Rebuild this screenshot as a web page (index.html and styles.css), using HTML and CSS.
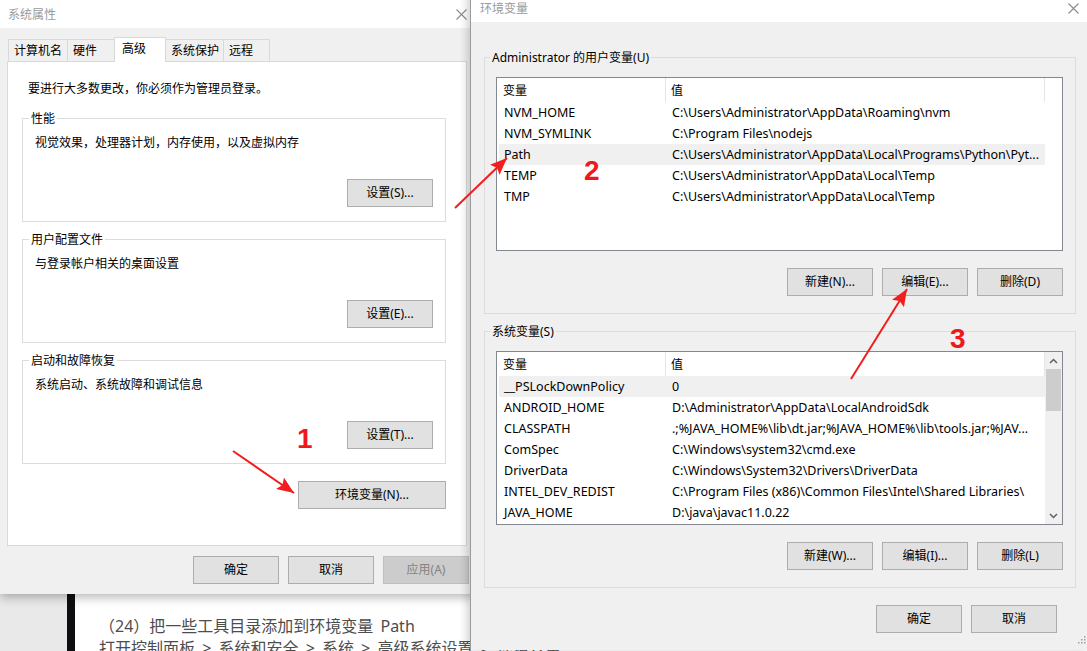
FILE: index.html
```html
<!DOCTYPE html>
<html lang="zh-CN">
<head>
<meta charset="utf-8">
<title>环境变量</title>
<link rel="stylesheet" href="styles.css">
</head>
<body>
<div class="desktop">
  <div class="doc">
    <div class="doc-side"></div>
    <div class="doc-strip"></div>
    <div class="doc-page">
      <p class="doc-line">（24）把一些工具目录添加到环境变量 Path</p>
      <p class="doc-line">打开控制面板 &gt; 系统和安全 &gt; 系统 &gt; 高级系统设置 &gt; 环境变量</p>
    </div>
  </div>

  <div class="win win-sys">
    <div class="titlebar">
      <span class="title">系统属性</span>
      <span class="close"><svg width="11" height="11" viewBox="0 0 11 11"><path d="M0.5 0.5L10.5 10.5M10.5 0.5L0.5 10.5" stroke="#8c8c8c" stroke-width="1.1" fill="none"/></svg></span>
    </div>
    <div class="sys-body">
      <div class="tabs">
        <div class="tab t1">计算机名</div>
        <div class="tab t2">硬件</div>
        <div class="tab t3 active">高级</div>
        <div class="tab t4">系统保护</div>
        <div class="tab t5">远程</div>
      </div>
      <div class="tabpanel">
        <p class="notice">要进行大多数更改，你必须作为管理员登录。</p>
        <div class="group">
          <div class="group-label">性能</div>
          <p class="group-desc">视觉效果，处理器计划，内存使用，以及虚拟内存</p>
          <div class="btnrow"><button class="btn">设置(S)...</button></div>
        </div>
        <div class="group">
          <div class="group-label">用户配置文件</div>
          <p class="group-desc">与登录帐户相关的桌面设置</p>
          <div class="btnrow"><button class="btn">设置(E)...</button></div>
        </div>
        <div class="group">
          <div class="group-label">启动和故障恢复</div>
          <p class="group-desc">系统启动、系统故障和调试信息</p>
          <div class="btnrow"><button class="btn">设置(T)...</button></div>
        </div>
        <div class="btnrow env-row"><button class="btn btn-wide">环境变量(N)...</button></div>
      </div>
      <div class="dlg-buttons sys-buttons">
        <button class="btn">确定</button>
        <button class="btn">取消</button>
        <button class="btn btn-disabled">应用(A)</button>
      </div>
    </div>
  </div>

  <div class="win win-env">
    <div class="titlebar">
      <span class="title">环境变量</span>
      <span class="close close-env"><svg width="11" height="11" viewBox="0 0 11 11"><path d="M0.5 0.5L10.5 10.5M10.5 0.5L0.5 10.5" stroke="#8c8c8c" stroke-width="1.1" fill="none"/></svg></span>
    </div>
    <div class="env-body">
      <div class="group egroup">
        <div class="group-label">Administrator 的用户变量(U)</div>
        <div class="list">
          <div class="list-main">
            <div class="list-head"><div class="hcell h1">变量</div><div class="hcell h2">值</div></div>
            <div class="rows">
              <div class="row"><span class="c1">NVM_HOME</span><span class="c2">C:\Users\Administrator\AppData\Roaming\nvm</span></div>
              <div class="row"><span class="c1">NVM_SYMLINK</span><span class="c2">C:\Program Files\nodejs</span></div>
              <div class="row sel"><span class="c1">Path</span><span class="c2">C:\Users\Administrator\AppData\Local\Programs\Python\Pyt...</span></div>
              <div class="row"><span class="c1">TEMP</span><span class="c2">C:\Users\Administrator\AppData\Local\Temp</span></div>
              <div class="row"><span class="c1">TMP</span><span class="c2">C:\Users\Administrator\AppData\Local\Temp</span></div>
            </div>
          </div>
        </div>
        <div class="btnrow list-buttons">
          <button class="btn">新建(N)...</button>
          <button class="btn">编辑(E)...</button>
          <button class="btn">删除(D)</button>
        </div>
      </div>

      <div class="group egroup">
        <div class="group-label">系统变量(S)</div>
        <div class="list">
          <div class="list-main">
            <div class="list-head"><div class="hcell h1">变量</div><div class="hcell h2">值</div></div>
            <div class="rows">
              <div class="row sel"><span class="c1">__PSLockDownPolicy</span><span class="c2">0</span></div>
              <div class="row"><span class="c1">ANDROID_HOME</span><span class="c2">D:\Administrator\AppData\LocalAndroidSdk</span></div>
              <div class="row"><span class="c1">CLASSPATH</span><span class="c2">.;%JAVA_HOME%\lib\dt.jar;%JAVA_HOME%\lib\tools.jar;%JAV...</span></div>
              <div class="row"><span class="c1">ComSpec</span><span class="c2">C:\Windows\system32\cmd.exe</span></div>
              <div class="row"><span class="c1">DriverData</span><span class="c2">C:\Windows\System32\Drivers\DriverData</span></div>
              <div class="row"><span class="c1">INTEL_DEV_REDIST</span><span class="c2">C:\Program Files (x86)\Common Files\Intel\Shared Libraries\</span></div>
              <div class="row"><span class="c1">JAVA_HOME</span><span class="c2">D:\java\javac11.0.22</span></div>
            </div>
          </div>
          <div class="scrollbar">
            <div class="sb-btn"><svg width="9" height="6" viewBox="0 0 9 6"><path d="M1 5L4.5 1.5L8 5" stroke="#606060" stroke-width="1.5" fill="none"/></svg></div>
            <div class="sb-track"><div class="sb-thumb"></div></div>
            <div class="sb-btn"><svg width="9" height="6" viewBox="0 0 9 6"><path d="M1 1L4.5 4.5L8 1" stroke="#606060" stroke-width="1.5" fill="none"/></svg></div>
          </div>
        </div>
        <div class="btnrow list-buttons">
          <button class="btn">新建(W)...</button>
          <button class="btn">编辑(I)...</button>
          <button class="btn">删除(L)</button>
        </div>
      </div>

      <div class="dlg-buttons env-buttons">
        <button class="btn">确定</button>
        <button class="btn">取消</button>
      </div>
    </div>
    <svg class="grip" width="10" height="10" viewBox="0 0 10 10"><g fill="#a0a0a0"><rect x="8" y="0" width="1.5" height="1.5"/><rect x="5" y="3" width="1.5" height="1.5"/><rect x="8" y="3" width="1.5" height="1.5"/><rect x="2" y="6" width="1.5" height="1.5"/><rect x="5" y="6" width="1.5" height="1.5"/><rect x="8" y="6" width="1.5" height="1.5"/></g></svg>
  </div>

  <div class="annot">
    <svg class="arrows" width="1087" height="651" viewBox="0 0 1087 651">
      <defs>
        <marker id="ah" markerUnits="userSpaceOnUse" markerWidth="18" markerHeight="14" refX="17" refY="7" orient="auto">
          <path d="M0 0L17 7L0 14L3 7Z" fill="#f21d1d"/>
        </marker>
      </defs>
      <line x1="233" y1="451" x2="294" y2="493" stroke="#f21d1d" stroke-width="2" marker-end="url(#ah)"/>
      <line x1="455" y1="208" x2="507" y2="158" stroke="#f21d1d" stroke-width="2" marker-end="url(#ah)"/>
      <line x1="851" y1="379" x2="907" y2="289" stroke="#f21d1d" stroke-width="2" marker-end="url(#ah)"/>
    </svg>
    <span class="num n1">1</span>
    <span class="num n2">2</span>
    <span class="num n3">3</span>
  </div>
</div>
</body>
</html>
```

FILE: styles.css
```css
* { box-sizing: border-box; }
html, body { margin: 0; padding: 0; }
body {
  width: 1087px;
  height: 651px;
  overflow: hidden;
  font-family: "Noto Sans", "Noto Sans CJK SC", sans-serif;
  font-size: 12px;
  color: #000;
  background: #fff;
}
p { margin: 0; }

.desktop { position: relative; width: 1087px; height: 651px; overflow: hidden; }

/* background document */
.doc { display: flex; height: 651px; }
.doc-side { width: 67px; background: #e9e9e9; }
.doc-strip { width: 8px; background: #0f0f12; }
.doc-page {
  flex: 1;
  background: #fff;
  padding: 615px 0 0 24px;
  font-family: "Noto Sans", "Noto Sans CJK SC", sans-serif;
  font-size: 16px;
  color: #4d4d4d;
}
.doc-line { line-height: 22px; white-space: nowrap; word-spacing: 3px; }

/* windows */
.win { position: absolute; background: #f0f0f0; display: flex; flex-direction: column; }
.win-sys { left: 0; top: 0; width: 476px; height: 594px; box-shadow: 0 3px 10px rgba(0,0,0,0.3); }
.win-env { left: 470px; top: -6px; width: 620px; height: 656px; border-left: 1px solid #9b9b9b; box-shadow: -3px 0 8px rgba(0,0,0,0.18); }

.titlebar { height: 28px; flex: none; background: #fff; display: flex; align-items: center; }
.title { flex: 1; padding-left: 8px; color: #9a9a9a; line-height: 16px; font-family: "Noto Sans CJK SC", sans-serif; }
.win-env .title { padding-left: 9px; }
.close { width: 30px; height: 28px; display: flex; align-items: center; justify-content: center; }
.close-env { width: 34px; }

/* buttons */
.btn {
  width: 86px;
  height: 28px;
  padding: 0;
  margin: 0;
  background: #e1e1e1;
  border: 1px solid #adadad;
  font-family: "Noto Sans", "Noto Sans CJK SC", sans-serif;
  font-size: 12px;
  color: #000;
  line-height: 16px;
}
.btn-wide { width: 148px; }
.btn-disabled { background: #cccccc; border-color: #bfbfbf; color: #838383; }
.btnrow { display: flex; justify-content: flex-end; }

/* system properties */
.sys-body { padding: 9px 0 0 7px; display: flex; flex-direction: column; }
.tabs { display: flex; align-items: flex-end; height: 24px; margin-left: 1px; }
.tab {
  height: 22px;
  border: 1px solid #d9d9d9;
  border-bottom: none;
  background: #f0f0f0;
  margin-right: -1px;
  padding: 1px 0 0 5px;
  display: flex;
  align-items: center;
  line-height: 16px;
  white-space: nowrap;
}
.t1 { width: 60px; }
.t2 { width: 48px; }
.t3 { width: 52px; }
.t4 { width: 59px; }
.t5 { width: 47px; }
.tab.active {
  height: 25px;
  background: #fff;
  margin-bottom: -1px;
  position: relative;
  z-index: 1;
  padding: 0 0 3px 7px;
}
.tabpanel {
  width: 460px;
  height: 485px;
  background: #fff;
  border: 1px solid #d9d9d9;
  padding: 19px 20px 0 14px;
}
.notice { line-height: 16px; margin-left: 6px; }

.group { border: 1px solid #dcdcdc; padding: 0 12px 14px 12px; margin-top: 17px; }
.tabpanel .notice + .group { margin-top: 21px; }
.group-label {
  width: max-content;
  margin: -8px 0 0 -6px;
  padding: 0 2px;
  background: #fff;
  line-height: 16px;
}
.group-desc { line-height: 16px; margin-top: 8px; }
.group .btnrow { margin-top: 28px; }
.env-row { margin-top: 17px; }

.dlg-buttons { display: flex; justify-content: flex-end; gap: 9px; }
.sys-buttons { margin-top: 10px; padding-right: 7px; }

/* environment variables */
.env-body { display: flex; flex-direction: column; padding: 35px 14px 0 13px; }
.egroup { padding: 0 12px 17px 11px; }
.env-body .egroup:first-child { margin-top: 0; }
.egroup .group-label { background: #f0f0f0; }

.list {
  margin-top: 11px;
  height: 174px;
  background: #fff;
  border: 1px solid #828790;
  display: flex;
  overflow: hidden;
}
.list-main { flex: 1; min-width: 0; }
.list-head { display: flex; height: 24px; }
.hcell { height: 24px; display: flex; align-items: center; border-right: 1px solid #e5e5e5; line-height: 16px; font-family: "Noto Sans CJK SC", sans-serif; }
.h1 { width: 169px; padding-left: 6px; }
.h2 { width: 379px; padding-left: 5px; }
.rows { margin-left: 2px; width: 546px; }
.row { display: flex; height: 21px; align-items: center; white-space: nowrap; line-height: 16px; font-size: 12.5px; }
.row.sel { background: #f0f0f0; }
.c1 { width: 167px; padding-left: 5px; flex: none; overflow: hidden; }
.c2 { flex: 1; padding-left: 6px; overflow: hidden; }

.scrollbar { width: 17px; flex: none; background: #f0f0f0; display: flex; flex-direction: column; }
.sb-btn { height: 17px; display: flex; align-items: center; justify-content: center; flex: none; }
.sb-track { flex: 1; }
.sb-thumb { height: 42px; margin: 0 1px; background: #cdcdcd; }

.egroup .list-buttons { margin-top: 17px; gap: 9px; }
.env-buttons { margin-top: 17px; padding-right: 19px; }

.grip { position: absolute; right: 4px; bottom: 4px; }

/* annotations */
.annot { position: absolute; left: 0; top: 0; width: 1087px; height: 651px; pointer-events: none; }
.arrows { position: absolute; left: 0; top: 0; }
.num {
  position: absolute;
  font-family: "Liberation Sans", Arial, sans-serif;
  font-weight: bold;
  font-size: 28px;
  line-height: 28px;
  color: #f01818;
}
.n1 { left: 297px; top: 425px; }
.n2 { left: 584px; top: 157px; }
.n3 { left: 950px; top: 325px; }
```
